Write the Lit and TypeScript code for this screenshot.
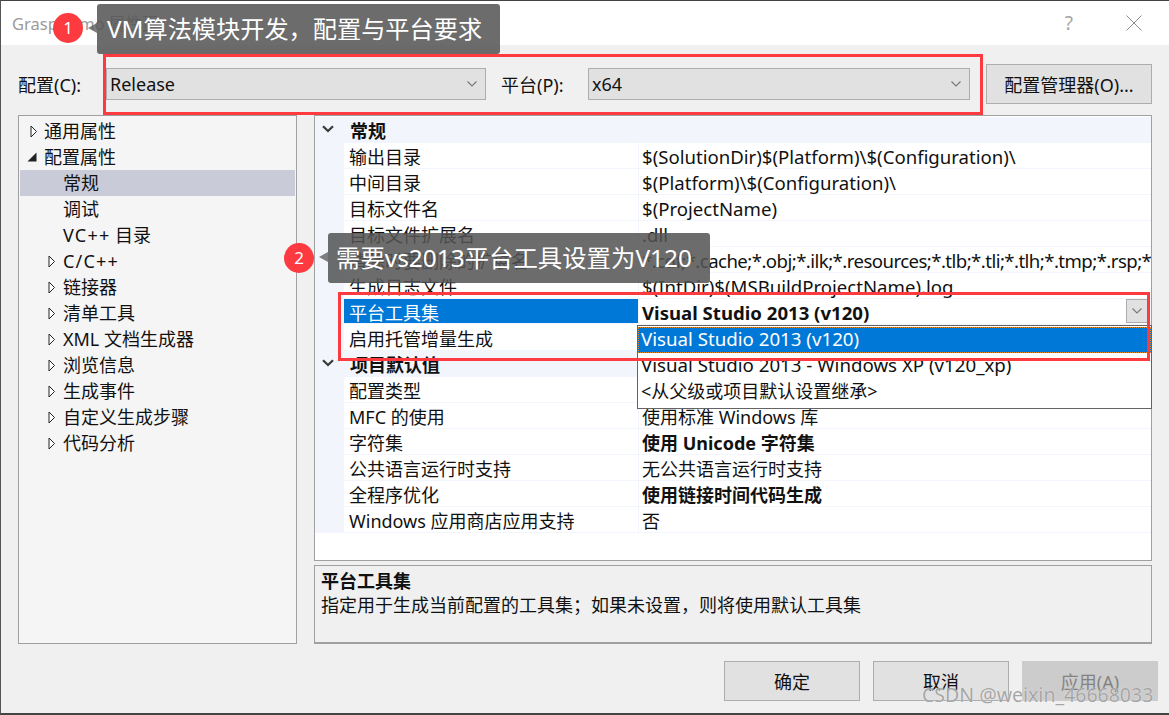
import { LitElement, html, css, svg } from "lit";
import { customElement } from "lit/decorators.js";

type Row = { k: string; v?: string; bold?: boolean; section?: boolean; sel?: boolean; lat?: boolean; tight?: boolean };

const ROWS: Row[] = [
  { k: "常规", section: true },
  { k: "输出目录", v: "$(SolutionDir)$(Platform)\\$(Configuration)\\", lat: true },
  { k: "中间目录", v: "$(Platform)\\$(Configuration)\\", lat: true },
  { k: "目标文件名", v: "$(ProjectName)", lat: true },
  { k: "目标文件扩展名", v: ".dll", lat: true },
  { k: "清除时要删除的扩展名", v: "*.cdf;*.cache;*.obj;*.ilk;*.resources;*.tlb;*.tli;*.tlh;*.tmp;*.rsp;*.pgc;*.pgd;*.meta", lat: true, tight: true },
  { k: "生成日志文件", v: "$(IntDir)$(MSBuildProjectName).log", lat: true },
  { k: "平台工具集", v: "Visual Studio 2013 (v120)", bold: true, sel: true, lat: true },
  { k: "启用托管增量生成", v: "" },
  { k: "项目默认值", section: true },
  { k: "配置类型", v: "" },
  { k: "MFC 的使用", v: "使用标准 Windows 库" },
  { k: "字符集", v: "使用 Unicode 字符集", bold: true },
  { k: "公共语言运行时支持", v: "无公共语言运行时支持" },
  { k: "全程序优化", v: "使用链接时间代码生成", bold: true },
  { k: "Windows 应用商店应用支持", v: "否" },
];

type Tree = { t: string; wide?: string; i: "open" | "closed" | "none"; sub?: boolean; sel?: boolean };
const TREE: Tree[] = [
  { t: "通用属性", i: "closed" },
  { t: "配置属性", i: "open" },
  { t: "常规", i: "none", sub: true, sel: true },
  { t: "调试", i: "none", sub: true },
  { t: " 目录", wide: "VC++", i: "none", sub: true },
  { t: "", wide: "C/C++", i: "closed", sub: true },
  { t: "链接器", i: "closed", sub: true },
  { t: "清单工具", i: "closed", sub: true },
  { t: "XML 文档生成器", i: "closed", sub: true },
  { t: "浏览信息", i: "closed", sub: true },
  { t: "生成事件", i: "closed", sub: true },
  { t: "自定义生成步骤", i: "closed", sub: true },
  { t: "代码分析", i: "closed", sub: true },
];

const chevron = svg`<svg width="12" height="8" viewBox="0 0 12 8"><path d="M1.5 1.5 6 6l4.5-4.5" fill="none" stroke="#777" stroke-width="1.1"/></svg>`;
const secChevron = svg`<svg width="12" height="8" viewBox="0 0 12 8"><path d="M1 1.2 6 6l5-4.8" fill="none" stroke="#3a3a3a" stroke-width="2.2"/></svg>`;
const triClosed = svg`<svg width="8" height="13" viewBox="0 0 8 13"><path d="M1 1l5.5 5.5L1 12z" fill="#fff" stroke="#222" stroke-width="1"/></svg>`;
const triOpen = svg`<svg width="10" height="10" viewBox="0 0 10 10"><path d="M9.5 0.5v9h-9z" fill="#222"/></svg>`;

@customElement("app-root")
export class AppRoot extends LitElement {
  static styles = css`
    :host {
      display: block;
      width: 1169px;
      height: 715px;
      position: relative;
      overflow: hidden;
      box-sizing: border-box;
      background: #f0f0f0;
      color: #111;
      font-family: "Noto Sans", "Noto Sans CJK SC", sans-serif;
      font-size: 18px;
      border-left: 1px solid #555;
      border-top: 1px solid #444;
      border-bottom: 2px solid #444;
    }
    * { box-sizing: border-box; }
    .title {
      height: 44px;
      background: #fff;
      display: flex;
      align-items: center;
      padding: 0 27px 0 11px;
      color: #9b9b9b;
      font-size: 16.5px;
    }
    .title .name { flex: 1; }
    .help { font-size: 19px; color: #a5a5a5; margin-right: 53px; }
    .config {
      display: flex;
      align-items: center;
      height: 40px;
      margin: 19px 0 11px 17px;
    }
    .combo {
      height: 32px;
      background: #e1e1e1;
      border: 1px solid #adadad;
      display: flex;
      align-items: center;
      justify-content: space-between;
      padding: 0 7px 0 3px;
      font-size: 18px;
    }
    .lbl1 { width: 88px; }
    .c1 { width: 380px; }
    .lbl2 { width: 87px; margin-left: 15px; }
    .c2 { width: 382px; }
    .mgr {
      width: 166px;
      height: 40px;
      margin-left: 16px;
      background: #e1e1e1;
      border: 1px solid #adadad;
      display: flex;
      align-items: center;
      justify-content: center;
    }
    .panes {
      display: grid;
      grid-template-columns: 279px 838px;
      column-gap: 17px;
      margin-left: 17px;
      height: 529px;
    }
    .tree {
      background: #f5f5f5;
      border: 1px solid #a0a0a0;
      padding: 2px 1px;
    }
    .node {
      height: 26px;
      display: flex;
      align-items: center;
      position: relative;
      padding-left: 24px;
      line-height: 26px;
      white-space: pre;
    }
    .node.sub { padding-left: 43px; }
    .node.sel { background: #c9cbd9; }
    .node .ic { position: absolute; left: 10px; top: 0; height: 26px; display: flex; align-items: center; }
    .node.sub .ic { left: 28px; }
    .node .ic.open { left: 7px; }
    .wide { letter-spacing: 1.2px; }
    .right { display: flex; flex-direction: column; gap: 4px; }
    .grid {
      height: 446px;
      background: #fff;
      border: 1px solid #a0a0a0;
      padding-top: 1px;
      overflow: hidden;
    }
    .row {
      height: 26px;
      display: grid;
      grid-template-columns: 29px 294px 1fr;
      line-height: 29px;
      white-space: nowrap;
    }
    .gut { background: #f2f5fb; }
    .row.section {
      background: #f2f5fb;
      font-weight: 700;
      position: relative;
      display: flex;
      padding-left: 35px;
    }
    .row.section .ic { position: absolute; left: 7px; top: 8px; line-height: 0; }
    .key {
      padding-left: 5px;
      border-bottom: 1px solid #f2f5fb;
      overflow: hidden;
    }
    .val {
      padding-left: 3px;
      border-left: 1px solid #f2f5fb;
      border-bottom: 1px solid #f2f5fb;
      overflow: hidden;
      position: relative;
    }
    .val.lat { font-size: 18.6px; line-height: 27px; }
    .val.tight { letter-spacing: -0.55px; }
    .row.sel .key { background: #0078d7; color: #fff; height: 25px; }
    .b { font-weight: 700; }
    .pick {
      position: absolute;
      right: 3px;
      top: 0;
      width: 22px;
      height: 24px;
      background: #e1e1e1;
      border: 1px solid #adadad;
      display: flex;
      align-items: center;
      justify-content: center;
    }
    .desc {
      flex: 1;
      border: 1px solid #a0a0a0;
      border-bottom-width: 2px;
      padding: 3px 6px;
      line-height: 24px;
    }
    .desc b { display: block; }
    .foot {
      display: flex;
      justify-content: flex-end;
      gap: 13px;
      margin-top: 17px;
      padding-right: 11px;
    }
    .btn {
      width: 136px;
      height: 40px;
      background: #e1e1e1;
      border: 1px solid #adadad;
      display: flex;
      align-items: center;
      justify-content: center;
    }
    .btn.off { background: #ccc; border-color: #ccc; color: #838383; }
    /* overlays */
    .popup {
      position: absolute;
      left: 636px;
      top: 324px;
      width: 515px;
      height: 84px;
      background: #fff;
      border: 1px solid #646464;
      padding-top: 1px;
    }
    .opt { height: 26px; line-height: 25px; padding-left: 3px; white-space: nowrap; }
    .opt.lat { font-size: 18.7px; line-height: 23px; }
    .opt.on { background: #0078d7; color: #fff; outline: 1px dotted #e08a20; outline-offset: -1px; }
    .redbox { position: absolute; border: 3px solid #fc3a3f; pointer-events: none; }
    .rb1 { left: 102px; top: 53px; width: 880px; height: 61px; }
    .rb2 { left: 337px; top: 291px; width: 812px; height: 69px; }
    .tip {
      position: absolute;
      background: rgba(84, 84, 84, 0.86);
      color: #fff;
      border-radius: 3px;
      height: 50px;
      line-height: 49px;
      white-space: nowrap;
      font-size: 24.2px;
    }
    .tip::before {
      content: "";
      position: absolute;
      left: -9px;
      top: 19px;
      border: 5px solid transparent;
      border-left: 0;
      border-right: 9px solid rgba(84, 84, 84, 0.75);
    }
    .t1 { left: 96px; top: 3px; width: 403px; padding-left: 10px; }
    .t2 { left: 327px; top: 232px; width: 382px; padding-left: 8px; font-size: 24.4px; }
    .badge {
      position: absolute;
      width: 30px;
      height: 30px;
      border-radius: 50%;
      background: #fc3a3f;
      color: #fff;
      font-size: 17px;
      line-height: 29px;
      text-align: center;
    }
    .b1 { left: 52px; top: 12px; }
    .b2 { left: 283px; top: 242px; }
    .mark {
      position: absolute;
      left: 921px;
      top: 682px;
      font-size: 19.5px;
      line-height: 24px;
      color: rgba(150, 150, 150, 0.85);
      white-space: nowrap;
      text-shadow: 0 0 1px rgba(255, 255, 255, 0.9);
    }
  `;

  private renderRow(r: Row) {
    if (r.section) {
      return html`<div class="row section"><span class="ic">${secChevron}</span>${r.k}</div>`;
    }
    return html`<div class="row ${r.sel ? "sel" : ""}">
      <div class="gut"></div>
      <div class="key">${r.k}</div>
      <div class="val ${r.bold ? "b" : ""} ${r.lat ? "lat" : ""} ${r.tight ? "tight" : ""}">${r.v}${r.sel ? html`<span class="pick">${chevron}</span>` : ""}</div>
    </div>`;
  }

  render() {
    return html`
      <div class="title">
        <span class="name">GraspDemo 属性页</span>
        <span class="help">?</span>
        <svg width="16" height="16" viewBox="0 0 16 16"><path d="M.5.5l15 15M15.5.5l-15 15" stroke="#8a8a8a" fill="none"/></svg>
      </div>
      <div class="config">
        <span class="lbl1">配置(C):</span>
        <div class="combo c1"><span>Release</span>${chevron}</div>
        <span class="lbl2">平台(P):</span>
        <div class="combo c2"><span>x64</span>${chevron}</div>
        <div class="mgr">配置管理器(O)...</div>
      </div>
      <div class="panes">
        <div class="tree">
          ${TREE.map(
            (n) => html`<div class="node ${n.sub ? "sub" : ""} ${n.sel ? "sel" : ""}">${n.i === "closed" ? html`<span class="ic">${triClosed}</span>` : ""}${n.i === "open" ? html`<span class="ic open">${triOpen}</span>` : ""}${n.wide ? html`<span class="wide">${n.wide}</span>` : ""}<span>${n.t}</span></div>`
          )}
        </div>
        <div class="right">
          <div class="grid">${ROWS.map((r) => this.renderRow(r))}</div>
          <div class="desc">
            <b>平台工具集</b>
            指定用于生成当前配置的工具集；如果未设置，则将使用默认工具集
          </div>
        </div>
      </div>
      <div class="foot">
        <div class="btn">确定</div>
        <div class="btn">取消</div>
        <div class="btn off">应用(A)</div>
      </div>

      <div class="popup">
        <div class="opt lat on">Visual Studio 2013 (v120)</div>
        <div class="opt lat">Visual Studio 2013 - Windows XP (v120_xp)</div>
        <div class="opt">&lt;从父级或项目默认设置继承&gt;</div>
      </div>
      <div class="redbox rb1"></div>
      <div class="redbox rb2"></div>
      <div class="tip t1">VM算法模块开发，配置与平台要求</div>
      <div class="badge b1">1</div>
      <div class="tip t2">需要vs2013平台工具设置为V120</div>
      <div class="badge b2">2</div>
      <div class="mark">CSDN @weixin_46668033</div>
    `;
  }
}
